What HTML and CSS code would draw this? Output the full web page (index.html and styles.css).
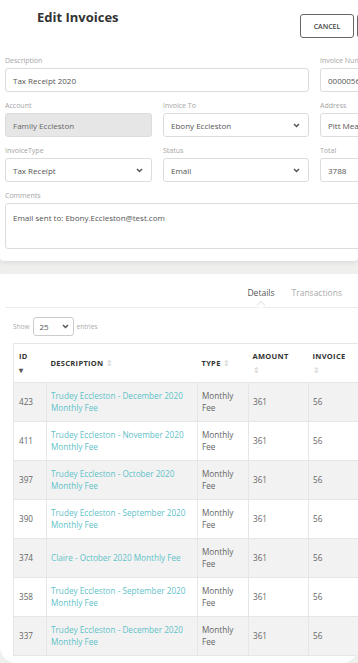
FILE: index.html
```html
<!DOCTYPE html>
<html lang="en">

<head>
	<meta charset="UTF-8">
	<meta name="viewport" content="width=device-width, initial-scale=1.0">
	<title>Edit Invoices</title>
	<link rel="stylesheet" href="styles.css">
</head>

<body>

	<div class="sheet sheet-top">
		<div class="head">
			<h1>Edit Invoices</h1>
			<div class="actions">
				<button class="btn">CANCEL</button>
				<button class="btn">SAVE</button>
			</div>
		</div>

		<div class="fields">
			<div class="field span-2">
				<label>Description</label>
				<div class="box">Tax Receipt 2020</div>
			</div>
			<div class="field">
				<label>Invoice Number</label>
				<div class="box">00000567</div>
			</div>

			<div class="field">
				<label>Account</label>
				<div class="box disabled">Family Eccleston</div>
			</div>
			<div class="field">
				<label>Invoice To</label>
				<div class="box select">Ebony Eccleston
					<svg class="chev" width="7" height="5" viewBox="0 0 7 5"><path d="M1 1l2.5 2.5L6 1" fill="none" stroke="#555" stroke-width="1.5"/></svg>
				</div>
			</div>
			<div class="field">
				<label>Address</label>
				<div class="box">Pitt Meadows</div>
			</div>

			<div class="field">
				<label>InvoiceType</label>
				<div class="box select">Tax Receipt
					<svg class="chev" width="7" height="5" viewBox="0 0 7 5"><path d="M1 1l2.5 2.5L6 1" fill="none" stroke="#555" stroke-width="1.5"/></svg>
				</div>
			</div>
			<div class="field">
				<label>Status</label>
				<div class="box select">Email
					<svg class="chev" width="7" height="5" viewBox="0 0 7 5"><path d="M1 1l2.5 2.5L6 1" fill="none" stroke="#555" stroke-width="1.5"/></svg>
				</div>
			</div>
			<div class="field">
				<label>Total</label>
				<div class="box">3788</div>
			</div>

			<div class="field span-3">
				<label>Comments</label>
				<div class="box area">Email sent to: Ebony.Eccleston@test.com</div>
			</div>
		</div>
	</div>

	<div class="sheet sheet-list">
		<div class="tabs">
			<span class="tab active">Details</span>
			<span class="tab">Transactions</span>
		</div>

		<div class="length">
			Show
			<div class="box select small">25
				<svg class="chev" width="7" height="5" viewBox="0 0 7 5"><path d="M1 1l2.5 2.5L6 1" fill="none" stroke="#555" stroke-width="1.5"/></svg>
			</div>
			entries
		</div>

		<table class="grid">
			<colgroup>
				<col style="width:33px">
				<col style="width:151px">
				<col style="width:51px">
				<col style="width:60px">
				<col style="width:70px">
			</colgroup>
			<thead>
				<tr>
					<th>ID <span class="sort-on below">&#9662;</span></th>
					<th>DESCRIPTION <span class="sort">&#8661;</span></th>
					<th>TYPE <span class="sort">&#8661;</span></th>
					<th>AMOUNT <span class="sort below">&#8661;</span></th>
					<th>INVOICE <span class="sort below">&#8661;</span></th>
				</tr>
			</thead>
			<tbody>
				<tr><td>423</td><td><a href="#">Trudey Eccleston - December 2020 Monthly Fee</a></td><td>Monthly Fee</td><td>361</td><td>56</td></tr>
				<tr><td>411</td><td><a href="#">Trudey Eccleston - November 2020 Monthly Fee</a></td><td>Monthly Fee</td><td>361</td><td>56</td></tr>
				<tr><td>397</td><td><a href="#">Trudey Eccleston - October 2020 Monthly Fee</a></td><td>Monthly Fee</td><td>361</td><td>56</td></tr>
				<tr><td>390</td><td><a href="#">Trudey Eccleston - September 2020 Monthly Fee</a></td><td>Monthly Fee</td><td>361</td><td>56</td></tr>
				<tr><td>374</td><td><a href="#">Claire - October 2020 Monthly Fee</a></td><td>Monthly Fee</td><td>361</td><td>56</td></tr>
				<tr><td>358</td><td><a href="#">Trudey Eccleston - September 2020 Monthly Fee</a></td><td>Monthly Fee</td><td>361</td><td>56</td></tr>
				<tr><td>337</td><td><a href="#">Trudey Eccleston - December 2020 Monthly Fee</a></td><td>Monthly Fee</td><td>361</td><td>56</td></tr>
			</tbody>
		</table>
	</div>

</body>

</html>
```

FILE: styles.css
```css
*,
*::before,
*::after {
	box-sizing: border-box;
}

body {
	margin: 0;
	padding: 0;
	font-family: "Open Sans", sans-serif;
	background-color: #efefed;
	color: #555;
	overflow: hidden;
}

.sheet {
	width: 100%;
	overflow: hidden;
	background-color: white;
}

.sheet-top {
	height: 261px;
	border-radius: 0 0 4px 4px;
	box-shadow: 0 2px 5px rgba(0, 0, 0, 0.08);
}

.sheet-list {
	margin-top: 13px;
	height: 389px;
	border-radius: 0 0 16px 16px;
}

/* header */
.head {
	display: flex;
	align-items: flex-start;
	padding: 14px 0 0 37px;
	height: 56px;
}

.head h1 {
	flex: 0 0 263px;
	margin: -7px 0 0;
	font-size: 13px;
	line-height: 20px;
	color: #333;
}

.actions {
	display: flex;
	gap: 3px;
	flex-shrink: 0;
}

.btn {
	width: 54px;
	height: 24px;
	padding: 0;
	border: 1px solid #666;
	border-radius: 3px;
	background: white;
	font-family: inherit;
	font-size: 7px;
	font-weight: 600;
	color: #444;
}

/* form */
.fields {
	display: grid;
	grid-template-columns: 147px 146px 147px;
	column-gap: 11px;
	row-gap: 9px;
	padding-left: 5px;
	width: 470px;
}

.span-2 {
	grid-column: span 2;
}

.span-3 {
	grid-column: span 3;
}

.field label {
	display: block;
	font-size: 7px;
	line-height: 10px;
	margin-bottom: 2px;
	color: #a5a5a5;
}

.box {
	display: flex;
	align-items: center;
	justify-content: space-between;
	height: 24px;
	padding: 0 8px 0 7px;
	border: 1px solid #dcdcdc;
	border-radius: 3px;
	background: white;
	font-size: 8px;
	color: #555;
}

.box.disabled {
	background-color: #e6e6e6;
	color: #666;
}

.box.area {
	height: 46px;
	align-items: flex-start;
	padding-top: 8px;
}

.chev {
	flex-shrink: 0;
}

/* tabs */
.tabs {
	display: flex;
	justify-content: flex-end;
	gap: 17px;
	height: 34px;
	margin-left: 5px;
	padding: 13px 16px 0 0;
	border-bottom: 1px solid #ececec;
	font-size: 8.5px;
}

.tab {
	position: relative;
	color: #aaa;
}

.tab.active {
	color: #555;
}

.tab.active::after {
	content: "";
	position: absolute;
	left: 50%;
	top: 15px;
	width: 6px;
	height: 6px;
	margin-left: -3px;
	background: white;
	border-top: 1px solid #e4e4e4;
	border-left: 1px solid #e4e4e4;
	transform: rotate(45deg);
}

/* entries */
.length {
	display: flex;
	align-items: center;
	gap: 3px;
	margin: 9px 0 0 13px;
	font-size: 6.5px;
	color: #aaa;
}

.box.small {
	width: 41px;
	height: 19px;
	padding: 0 4px 0 6px;
	border-color: #ccc;
}

/* table */
.grid {
	margin: 7px 0 0 13px;
	border-collapse: collapse;
	table-layout: fixed;
	width: 365px;
	border: 1px solid #e6e6e6;
}

.grid th {
	height: 39px;
	padding: 0 4px;
	text-align: left;
	font-size: 7.5px;
	line-height: 12px;
	font-weight: 700;
	letter-spacing: 0.3px;
	color: #333;
	background: white;
}

.grid td {
	height: 39px;
	padding: 0 4px;
	border-left: 1px solid #e6e6e6;
	border-top: 1px solid #e6e6e6;
	font-size: 8.2px;
	line-height: 12.5px;
	color: #666;
}

.grid td:first-child {
	padding-left: 5px;
	border-left: none;
}

.grid th:first-child {
	padding-left: 5px;
}

.grid tbody tr:nth-child(odd) td {
	background-color: #f2f2f2;
}

.grid a {
	color: #5fc2c9;
	text-decoration: none;
}

.sort {
	color: #ccc;
	font-weight: 400;
}

.sort-on {
	color: #555;
}

.below {
	display: block;
	margin-top: 2px;
}
```
